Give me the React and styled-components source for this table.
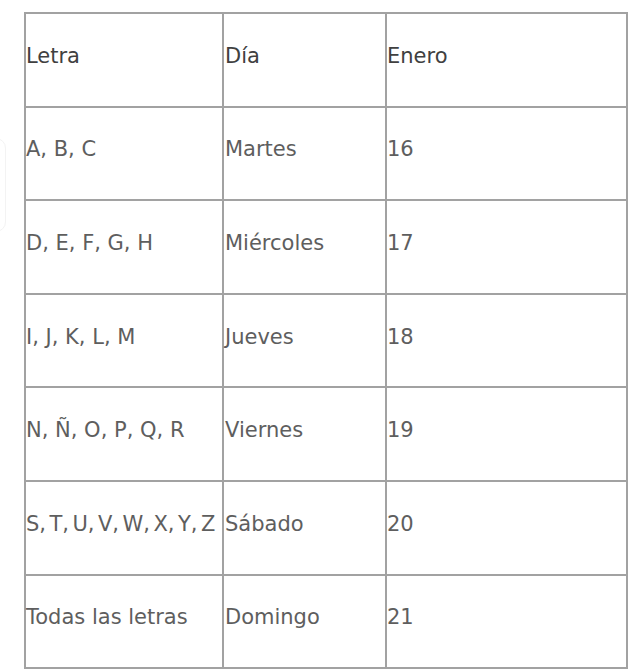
import React from "react";
import styled, { createGlobalStyle } from "styled-components";

const Global = createGlobalStyle`
  html, body { margin: 0; padding: 0; background: #fff; }
  body { font-family: "DejaVu Sans", "Open Sans", sans-serif; overflow: hidden; }
`;

const Page = styled.div`
  position: relative;
  width: 640px;
  height: 671px;
  padding: 12px 0 0 24px;
  box-sizing: border-box;
`;

const EdgeGhost = styled.div`
  position: absolute;
  left: -22px;
  top: 138px;
  width: 26px;
  height: 92px;
  border-radius: 10px;
  border: 1px solid #f3f3f3;
`;

const Table = styled.table`
  border-collapse: collapse;
  table-layout: fixed;
  width: 602px;
  font-size: 21px;
`;

const Cell = styled.td`
  border: 2px solid #a2a2a2;
  height: 83.6px;
  padding: 0 0 8px ${(p) => p.$pad || 0}px;
  vertical-align: middle;
  white-space: nowrap;
  overflow: visible;
  word-spacing: ${(p) => (p.$tight ? "-3.2px" : "0")};
  color: ${(p) => (p.$head ? "#404040" : "#5e5e5e")};
`;

const rows = [
  ["A, B, C", "Martes", "16"],
  ["D, E, F, G, H", "Miércoles", "17"],
  ["I, J, K, L, M", "Jueves", "18"],
  ["N, Ñ, O, P, Q, R", "Viernes", "19"],
  ["S, T, U, V, W, X, Y, Z", "Sábado", "20"],
  ["Todas las letras", "Domingo", "21"],
];

export default function App() {
  return (
    <>
      <Global />
      <Page>
        <EdgeGhost />
        <Table>
          <colgroup>
            <col style={{ width: 198 }} />
            <col style={{ width: 163 }} />
            <col style={{ width: 241 }} />
          </colgroup>
          <tbody>
            <tr>
              <Cell $head>Letra</Cell>
              <Cell $head $pad={1}>Día</Cell>
              <Cell $head>Enero</Cell>
            </tr>
            {rows.map((r) => (
              <tr key={r[0]}>
                <Cell $tight={r[0].length > 18}>{r[0]}</Cell>
                <Cell $pad={1}>{r[1]}</Cell>
                <Cell>{r[2]}</Cell>
              </tr>
            ))}
          </tbody>
        </Table>
      </Page>
    </>
  );
}
